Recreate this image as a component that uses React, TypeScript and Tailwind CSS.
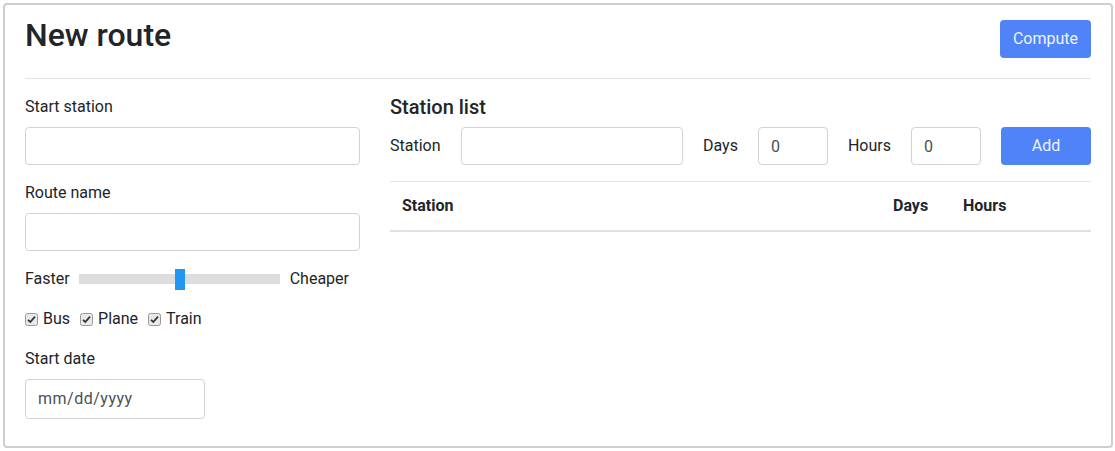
const font = { fontFamily: "Roboto, 'Liberation Sans', sans-serif" };

const Check = ({ label }: { label: string }) => (
  <label className="flex items-center gap-[5px]">
    <svg width="13" height="13" viewBox="0 0 13 13">
      <rect x="0.5" y="0.5" width="12" height="12" rx="2" fill="#e9e9e9" stroke="#9a9a9a" />
      <path d="M3 6.8 L5.3 9 L10 3.6" fill="none" stroke="#333" strokeWidth="1.8" />
    </svg>
    <span>{label}</span>
  </label>
);

const inputCls = "h-[38px] rounded-[4px] border border-[#ced4da] bg-white px-3 text-[#495057]";

export default function App() {
  return (
    <div style={font} className="text-[16px] leading-6 text-[#212529]">
      <div className="m-[3px] h-[445px] w-[1110px] rounded-[4px] border-2 border-[#cfcfcf] px-[20px] pt-[11px]">
        <div className="flex items-start justify-between">
          <h2 className="text-[32px] font-medium leading-[1.2]">New route</h2>
          <button className="mt-[4px] h-[38px] rounded-[4px] bg-[#4f83f7] px-[13px] text-[#eef3ff]">
            Compute
          </button>
        </div>
        <hr className="mt-[20px] border-t border-[#e3e3e3]" />
        <div className="mt-[16px] flex gap-[30px]">
          <div className="flex w-[335px] flex-col">
            <label className="mb-[8px]">Start station</label>
            <input className={inputCls} />
            <label className="mb-[8px] mt-[16px]">Route name</label>
            <input className={inputCls} />
            <div className="mt-[16px] flex items-center">
              <span>Faster</span>
              <div className="relative ml-[9px] h-[10px] w-[201px] bg-[#dddddd]">
                <div className="absolute left-[96px] top-[-5px] h-[21px] w-[10px] bg-[#2196f3]" />
              </div>
              <span className="ml-[10px]">Cheaper</span>
            </div>
            <div className="mt-[16px] flex items-center gap-[10px]">
              <Check label="Bus" />
              <Check label="Plane" />
              <Check label="Train" />
            </div>
            <label className="mb-[8px] mt-[16px]">Start date</label>
            <div className="flex h-[40px] w-[180px] items-center rounded-[4px] border border-[#ced4da] px-3 tracking-[0.5px] text-[#495057]">
              mm/dd/yyyy
            </div>
          </div>
          <div className="flex flex-1 flex-col">
            <h5 className="text-[20px] font-medium leading-[1.2]">Station list</h5>
            <div className="mt-[8px] flex items-center gap-[20px]">
              <span>Station</span>
              <input className={inputCls + " w-0 flex-1"} />
              <span>Days</span>
              <input className={inputCls + " w-[70px]"} defaultValue="0" />
              <span>Hours</span>
              <input className={inputCls + " w-[70px]"} defaultValue="0" />
              <button className="h-[38px] w-[90px] rounded-[4px] bg-[#4f83f7] text-[#eef3ff]">Add</button>
            </div>
            <div className="mt-[16px] grid grid-cols-[1fr_70px_140px] border-b-2 border-t border-b-[#dee2e6] border-t-[#e3e3e3] font-bold">
              <div className="p-3">Station</div>
              <div className="p-3">Days</div>
              <div className="p-3">Hours</div>
            </div>
          </div>
        </div>
      </div>
    </div>
  );
}
